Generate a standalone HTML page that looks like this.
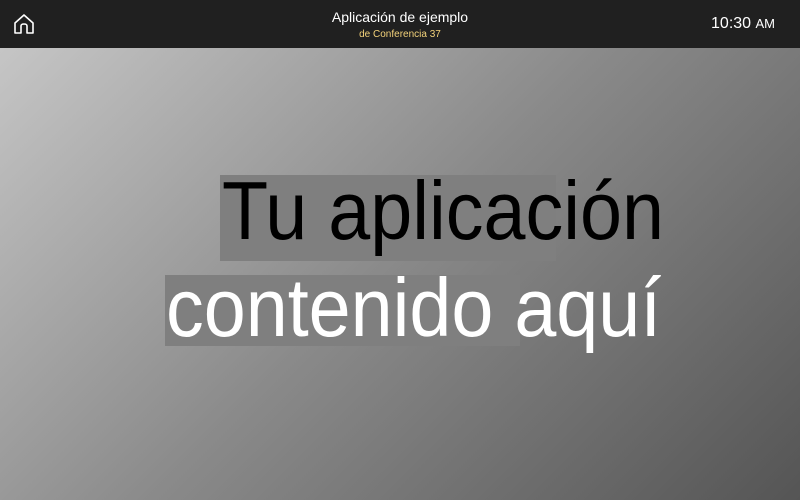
<!DOCTYPE html>
<html><head><meta charset="utf-8"><style>
body{margin:0;width:800px;height:500px;overflow:hidden;font-family:"Liberation Sans",sans-serif;background:linear-gradient(135deg,#cacaca 0%,#8a8a8a 50%,#555 100%);position:relative}
.hd{position:absolute;left:0;top:0;width:800px;height:48px;background:#202020;color:#fff}
.t1{position:absolute;left:0;width:800px;text-align:center;top:9px;font-size:14px}
.t2{position:absolute;left:0;width:800px;text-align:center;top:29px;font-size:10px;color:#f3d27a}
.tm{position:absolute;right:25px;top:15px;font-size:16px}
.tm small{font-size:13px}
.b{position:absolute;background:#7f7f7f}
.tx{position:absolute;font-size:74px;line-height:1;white-space:nowrap;transform:scale(1.02,1.12);transform-origin:0 62.6px}
</style></head><body>
<div class="hd">
<svg style="position:absolute;left:12px;top:12px" width="24" height="24" viewBox="0 0 24 24" fill="none" stroke="#fff" stroke-width="1.6" stroke-linejoin="round"><path d="M3 11 L12 3 L21 11 V21 H15 V14 Q15 12 12 12 Q9 12 9 14 V21 H3 Z"/></svg>
<div class="t1">Aplicación de ejemplo</div>
<div class="t2">de Conferencia 37</div>
<div class="tm">10:30 <small>AM</small></div>
</div>
<div class="b" style="left:220px;top:175px;width:336px;height:86px"></div>
<div class="b" style="left:165px;top:275px;width:355px;height:71px"></div>
<div class="tx" style="left:222px;top:177px;color:#000">Tu aplicación</div>
<div class="tx" style="left:166px;top:274px;color:#fff">contenido aquí</div>
</body></html>
